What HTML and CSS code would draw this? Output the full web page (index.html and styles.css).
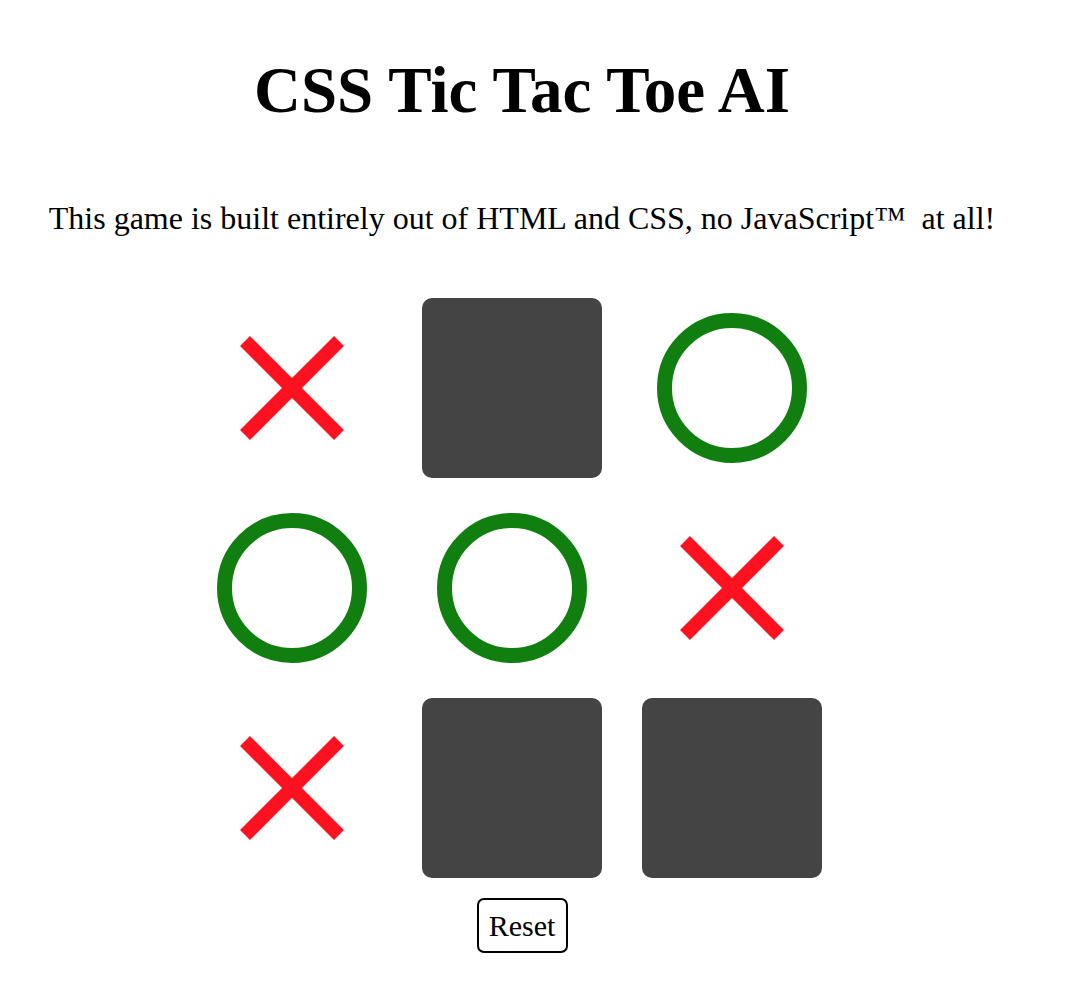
FILE: index.html
```html
<!DOCTYPE html>
<html>
<head>
<meta charset="utf-8">
<title>CSS Tic Tac Toe AI</title>
<link rel="stylesheet" href="styles.css">
</head>
<body>
<div class="page">
  <h1 class="title">CSS Tic Tac Toe AI</h1>
  <p class="intro">This game is built entirely out of HTML and CSS, no JavaScript™ &nbsp;at all!</p>
  <div class="board">
    <div class="cell"><svg class="x" viewBox="0 0 180 180"><line x1="43" y1="43" x2="137" y2="137"/><line x1="137" y1="43" x2="43" y2="137"/></svg></div>
    <div class="cell"><div class="empty"></div></div>
    <div class="cell"><div class="o"></div></div>
    <div class="cell"><div class="o"></div></div>
    <div class="cell"><div class="o"></div></div>
    <div class="cell"><svg class="x" viewBox="0 0 180 180"><line x1="43" y1="43" x2="137" y2="137"/><line x1="137" y1="43" x2="43" y2="137"/></svg></div>
    <div class="cell"><svg class="x" viewBox="0 0 180 180"><line x1="43" y1="43" x2="137" y2="137"/><line x1="137" y1="43" x2="43" y2="137"/></svg></div>
    <div class="cell"><div class="empty"></div></div>
    <div class="cell"><div class="empty"></div></div>
  </div>
  <button class="reset" type="button">Reset</button>
</div>
</body>
</html>
```

FILE: styles.css
```css
html, body {
  margin: 0;
  padding: 0;
  background: #fff;
}

.page {
  width: 1044px;
  text-align: center;
  font-family: "Liberation Serif", "Times New Roman", serif;
  color: #000;
  padding-top: 1px;
}

.title {
  font-size: 65px;
  font-weight: 700;
  line-height: 74px;
  margin: 52px 0 0;
}

.intro {
  font-size: 32px;
  line-height: 37px;
  margin: 73px 0 0;
}

.board {
  display: grid;
  grid-template-columns: repeat(3, 180px);
  grid-auto-rows: 180px;
  column-gap: 40px;
  row-gap: 20px;
  width: 620px;
  margin: 61px 0 0 202px;
}

.cell {
  display: flex;
  align-items: center;
  justify-content: center;
}

.empty {
  width: 180px;
  height: 180px;
  background: #444444;
  border-radius: 10px;
}

.x {
  width: 180px;
  height: 180px;
  display: block;
}

.x line {
  stroke: #ff111f;
  stroke-width: 14;
  stroke-linecap: butt;
}

.o {
  width: 120px;
  height: 120px;
  border: 15px solid #107f10;
  border-radius: 50%;
}

.reset {
  display: block;
  margin: 20px auto 0;
  width: 91px;
  height: 55px;
  padding: 0;
  background: #fff;
  border: 2px solid #000;
  border-radius: 7px;
  font-family: "Liberation Serif", "Times New Roman", serif;
  font-size: 30px;
  color: #000;
}
```
